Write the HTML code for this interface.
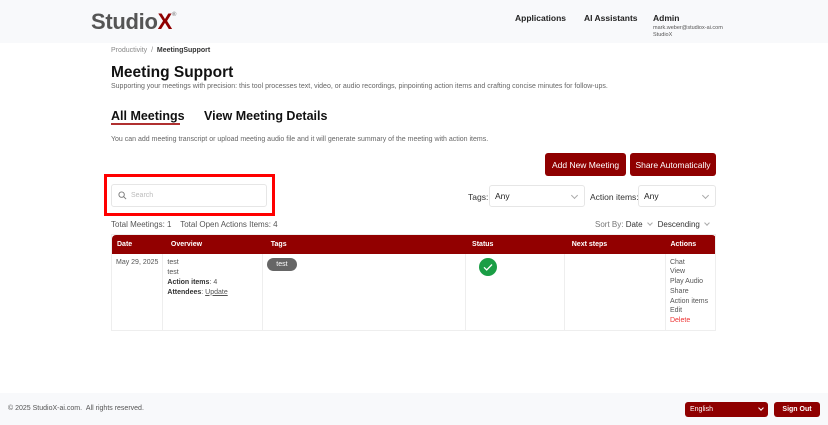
<!DOCTYPE html>
<html><head><meta charset="utf-8"><style>
*{box-sizing:border-box;margin:0;padding:0}
body{width:828px;height:425px;position:relative;font-family:"Liberation Sans",sans-serif;background:#fff;color:#222;overflow:hidden}
.a{position:absolute;white-space:nowrap}
.hdr{left:0;top:0;width:828px;height:43px;background:#f8f9fb}
.ftr{left:0;top:393px;width:828px;height:32px;background:#f8f9fb}
.btn{background:#8f0000;color:#fff;border-radius:3px;font-size:8.5px;display:flex;align-items:center;justify-content:center}
.sel{border:1px solid #e6e6e6;border-radius:3px;background:#fff;font-size:8.5px;padding-left:5px;display:flex;align-items:center}
.chev{position:absolute;right:7px;top:7px;width:5px;height:5px;border-right:1px solid #aaa;border-bottom:1px solid #aaa;transform:rotate(45deg)}
.sc{display:inline-block;width:4px;height:4px;border-right:1px solid #aaa;border-bottom:1px solid #aaa;transform:rotate(45deg);margin:0 6px 2px 5px}
table{border-collapse:collapse;font-size:7px}
th{background:#920000;color:#fff;text-align:left;font-weight:bold;height:19px;padding-left:5px}
td{vertical-align:top;border-right:1px solid #eee;padding:4px 4px;color:#555;line-height:10px;height:72px}
</style></head><body>
<div class="a hdr"></div>
<div class="a" style="left:91px;top:9px;font-size:22px;font-weight:bold;color:#555;letter-spacing:-0.3px">Studio<span style="color:#8f0000">X</span><sup style="font-size:6px;color:#888;vertical-align:top;position:relative;top:3px">®</sup></div>
<div class="a" style="left:515px;top:13px;font-size:8.5px;font-weight:bold">Applications</div>
<div class="a" style="left:584px;top:13px;font-size:8.5px;font-weight:bold">AI Assistants</div>
<div class="a" style="left:653px;top:13px;font-size:8.5px;font-weight:bold">Admin</div>
<div class="a" style="left:653px;top:25px;font-size:5.5px;color:#555;line-height:7px">mark.weber@studiox-ai.com<br>StudioX</div>
<div class="a" style="left:111px;top:47px;font-size:7px;color:#888">Productivity &nbsp;/&nbsp; <span style="color:#333;font-weight:bold">MeetingSupport</span></div>
<div class="a" style="left:111px;top:64px;font-size:15.5px;font-weight:bold;color:#111">Meeting Support</div>
<div class="a" style="left:111px;top:83px;font-size:7px;color:#666">Supporting your meetings with precision: this tool processes text, video, or audio recordings, pinpointing action items and crafting concise minutes for follow-ups.</div>
<div class="a" style="left:111px;top:109px;font-size:12.5px;font-weight:bold;color:#111">All Meetings</div>
<div class="a" style="left:111px;top:123px;width:69px;height:2px;background:#b03030"></div>
<div class="a" style="left:204px;top:109px;font-size:12.5px;font-weight:bold;color:#111">View Meeting Details</div>
<div class="a" style="left:111px;top:136px;font-size:7px;color:#666">You can add meeting transcript or upload meeting audio file and it will generate summary of the meeting with action items.</div>
<div class="a btn" style="left:545px;top:153px;width:81px;height:23px">Add New Meeting</div>
<div class="a btn" style="left:630px;top:153px;width:86px;height:23px">Share Automatically</div>
<div class="a" style="left:104px;top:174px;width:171px;height:42px;border:3px solid #f00"></div>
<div class="a sel" style="left:111px;top:184px;width:156px;height:23px;color:#bbb;font-size:7px;padding-left:6px"><svg width="9" height="9" viewBox="0 0 10 10" style="margin-right:4px"><circle cx="4" cy="4" r="3" fill="none" stroke="#777" stroke-width="1"/><path d="M6.3 6.3L9 9" stroke="#777" stroke-width="1"/></svg>Search</div>
<div class="a" style="left:468px;top:192px;font-size:8.5px;color:#333">Tags:</div>
<div class="a sel" style="left:489px;top:185px;width:96px;height:22px">Any<span class="chev"></span></div>
<div class="a" style="left:590px;top:192px;font-size:8.5px;color:#333">Action items:</div>
<div class="a sel" style="left:638px;top:185px;width:78px;height:22px">Any<span class="chev"></span></div>
<div class="a" style="left:111px;top:220px;font-size:8px;color:#555">Total Meetings: 1 &nbsp;&nbsp; Total Open Actions Items: 4</div>
<div class="a" style="left:595px;top:220px;font-size:8px;color:#777">Sort By: <span style="color:#333">Date</span><span class="sc"></span><span style="color:#333">Descending</span><span class="sc"></span></div>
<table class="a" style="left:111px;top:234px;width:605px;border:1px solid #eee">
<tr><th style="width:51px;border-radius:4px 0 0 0">Date</th><th style="width:100px;padding-left:8px">Overview</th><th style="width:203px;padding-left:8px">Tags</th><th style="width:100px;padding-left:7px">Status</th><th style="width:101px;padding-left:7px">Next steps</th><th style="width:50px;border-radius:0 4px 0 0">Actions</th></tr>
<tr><td>May 29, 2025</td><td>test<br>test<br><b style="color:#333">Action items</b>: 4<br><b style="color:#333">Attendees</b>: <u>Update</u></td>
<td><span style="display:inline-block;background:#666;color:#fff;border-radius:7px;padding:2px 9px;line-height:9px">test</span></td>
<td style="padding-left:13px"><svg width="18" height="18" viewBox="0 0 18 18"><circle cx="9" cy="9" r="9" fill="#1a9e45"/><path d="M5 9.3l2.7 2.7L13 6.5" fill="none" stroke="#fff" stroke-width="1.3"/></svg></td>
<td></td><td style="border-right:none;line-height:9.8px">Chat<br>View<br>Play Audio<br>Share<br>Action items<br>Edit<br><span style="color:#e33">Delete</span></td></tr>
</table>
<div class="a ftr"></div>
<div class="a" style="left:8px;top:405px;font-size:7px;color:#555">© 2025 StudioX-ai.com. &nbsp;All rights reserved.</div>
<div class="a btn" style="left:685px;top:402px;width:83px;height:15px;justify-content:flex-start;padding-left:5px;font-size:7px">English<span style="position:absolute;right:5px;top:4px;width:4px;height:4px;border-right:1px solid #fff;border-bottom:1px solid #fff;transform:rotate(45deg)"></span></div>
<div class="a btn" style="left:774px;top:402px;width:46px;height:15px;font-size:7px;font-weight:bold">Sign Out</div>
</body></html>
